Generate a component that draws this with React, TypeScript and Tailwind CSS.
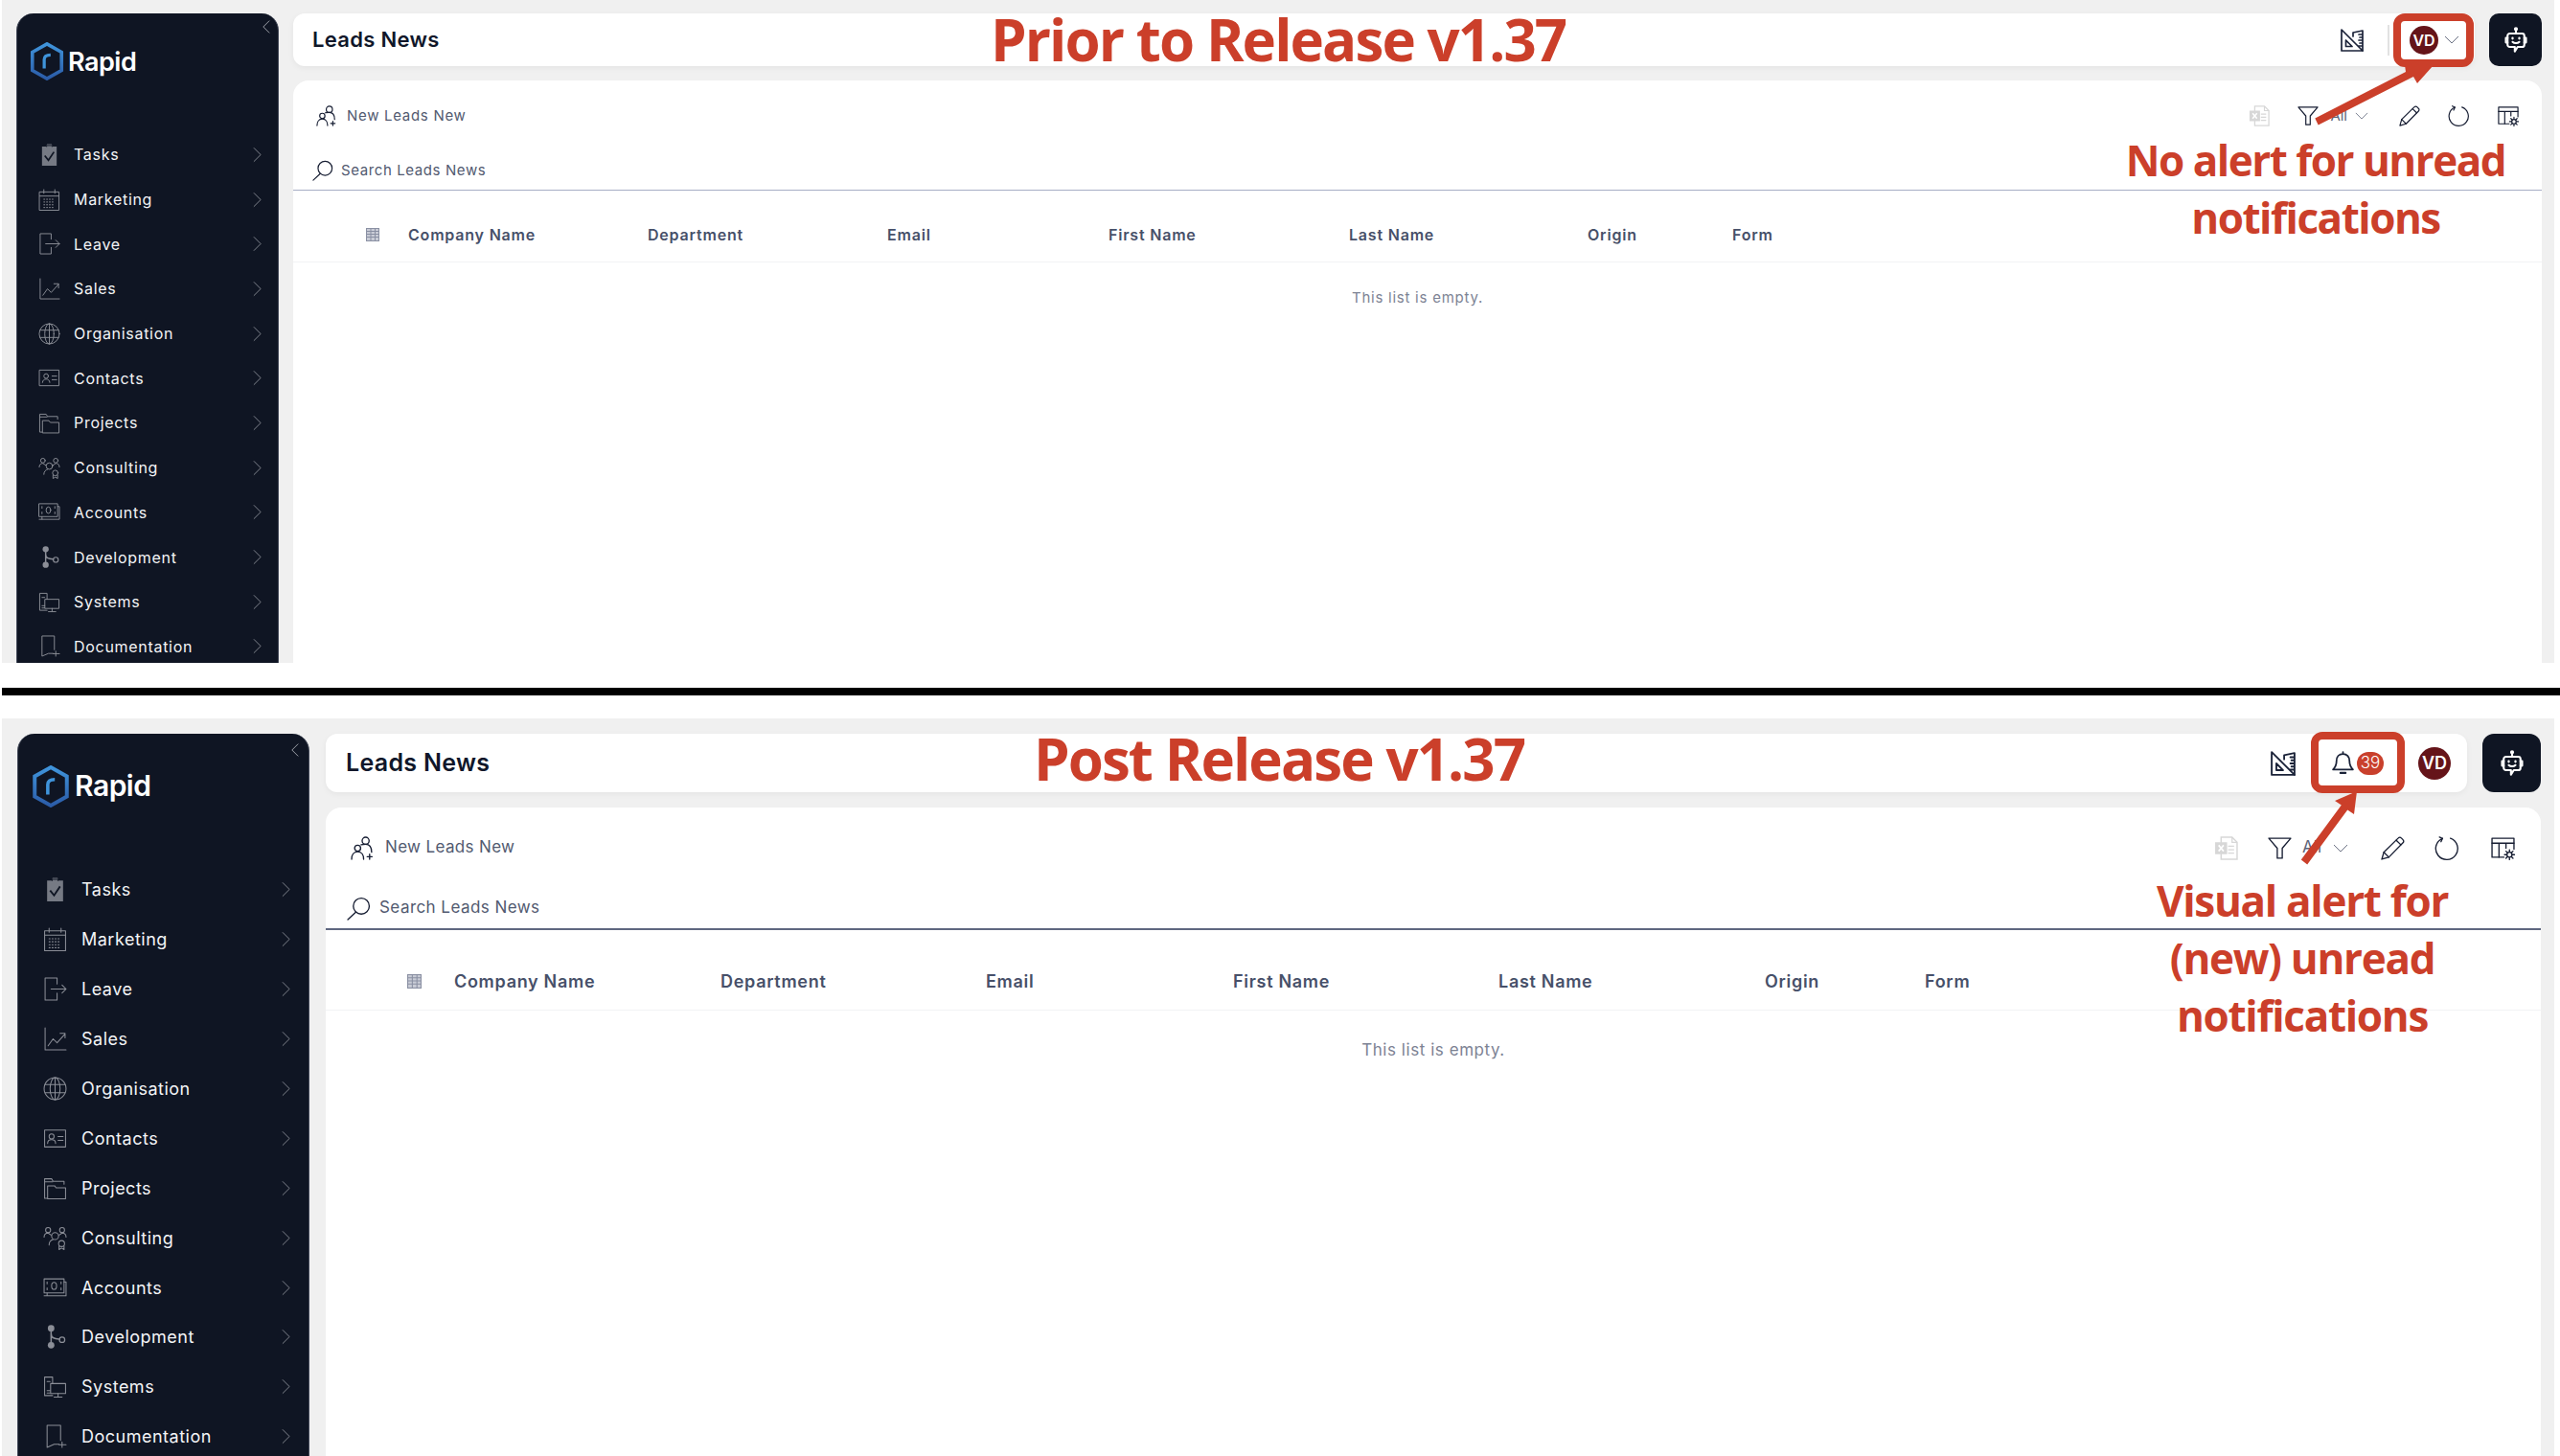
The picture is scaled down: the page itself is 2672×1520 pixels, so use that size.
import React from "react";

const FONT = "font-['Inter','Noto_Sans',sans-serif]";
const RED = "#cb3f2a";

type IconProps = { className?: string };
const Svg = ({ className, children, sw = 1 }: IconProps & { children: React.ReactNode; sw?: number }) => (
  <svg viewBox="0 0 24 24" fill="none" stroke="currentColor" strokeWidth={sw} strokeLinecap="round" strokeLinejoin="round" className={className}>
    {children}
  </svg>
);

const Tasks = (p: IconProps) => (
  <svg viewBox="0 0 24 24" className={p.className}>
    <path d="M4 3h4.500l1-2.500h5l1 2.500H20v21H4z" fill="#767a84" />
    <path d="M9 3.500V2h6v1.500" stroke="#0f1523" fill="none" />
    <path d="M7 13l4 5 6-9" stroke="#0f1523" strokeWidth="1.800" fill="none" />
  </svg>
);
const Marketing = (p: IconProps) => (
  <Svg {...p}>
    <rect x="1.500" y="3.500" width="21" height="20" />
    <path d="M1.500 8h21M6 1v4M18 1v4" />
    <path d="M6 11.500h12M6 14.500h12M6 17.500h12M6 20.500h12" strokeDasharray="1 2" />
  </Svg>
);
const Leave = (p: IconProps) => (
  <Svg {...p}>
    <path d="M14 7V1H2v22h12v-7" />
    <path d="M8 12h15M19 8l4 4-4 4" />
  </Svg>
);
const Sales = (p: IconProps) => (
  <Svg {...p}>
    <path d="M2 1v22h21" />
    <path d="M5 19l5-7 4 4 8-9M17 6.500h5V11" />
  </Svg>
);
const Org = (p: IconProps) => (
  <Svg {...p}>
    <circle cx="12" cy="12" r="11" />
    <ellipse cx="12" cy="12" rx="5" ry="11" />
    <path d="M12 1v22M2 8h20M2 16h20" />
  </Svg>
);
const Contacts = (p: IconProps) => (
  <Svg {...p}>
    <rect x="1.500" y="3.500" width="21" height="17" />
    <circle cx="8.500" cy="10" r="2.500" />
    <path d="M4.500 17c0-5 8-5 8 0M15 10h5M15 14h5" />
  </Svg>
);
const Projects = (p: IconProps) => (
  <Svg {...p}>
    <path d="M4 22H1.500V2.500h7l1.500 2.500h11v3" />
    <path d="M4.500 22.500V9.500h7l1.500 2h9.500v11z" />
    <path d="M1.500 5.500h8" />
  </Svg>
);
const Consulting = (p: IconProps) => (
  <Svg {...p}>
    <circle cx="5" cy="4" r="2.500" />
    <circle cx="19" cy="4" r="2.500" />
    <circle cx="12" cy="10" r="3.500" />
    <circle cx="18.500" cy="17.500" r="3" />
    <path d="M1 11c0-3 2-4 4-4l3 2M23 11c0-3-2-4-4-4l-3 2M6 19c0-3 2-5 4-5.500M16 20v3.500l2.500-1.500 2.500 1.500V20" />
  </Svg>
);
const Accounts = (p: IconProps) => (
  <Svg {...p}>
    <rect x="1" y="3" width="20" height="14" />
    <path d="M4 17v3h19V6h-2M1 20h3" />
    <ellipse cx="11" cy="10" rx="2.500" ry="3.500" />
    <path d="M4 6v2M4 12v2M18 6v2M18 12v2" />
  </Svg>
);
const Dev = (p: IconProps) => (
  <svg viewBox="0 0 24 24" className={p.className} fill="none">
    <path d="M8 4v16M8 9c0 5 5 5 9 5.500" stroke="#8b8e97" strokeWidth="1.500" />
    <circle cx="8" cy="3.500" r="3.300" fill="#8b8e97" />
    <circle cx="8" cy="20.500" r="3.300" fill="#8b8e97" />
    <circle cx="19" cy="15" r="2.700" stroke="#8b8e97" strokeWidth="1.200" />
  </svg>
);
const Systems = (p: IconProps) => (
  <Svg {...p}>
    <path d="M9.500 21H1.500V2.500h8V9" />
    <rect x="7.500" y="9" width="15" height="10" />
    <path d="M15 19v3M11 22.500h8M4 7h3M4 16h3M4 18.500h3" />
  </Svg>
);
const Doc = (p: IconProps) => (
  <Svg {...p}>
    <path d="M17.500 16V1H4v22l7-3h5" />
    <path d="M19 17.500v5.500M16 20.300h7" />
  </Svg>
);
const Chevron = ({ className }: IconProps) => (
  <svg viewBox="0 0 10 18" fill="none" stroke="currentColor" strokeWidth="1" className={className}>
    <path d="M1 1l8 8-8 8" />
  </svg>
);
const ChevronLeft = ({ className }: IconProps) => (
  <svg viewBox="0 0 10 18" fill="none" stroke="currentColor" strokeWidth="1.200" className={className}>
    <path d="M9 1L1 9l8 8" />
  </svg>
);
const ChevronDown = ({ className }: IconProps) => (
  <svg viewBox="0 0 16 9" fill="none" stroke="currentColor" strokeWidth="0.900" className={className}>
    <path d="M1 1l7 7 7-7" />
  </svg>
);
const Logo = ({ className, id }: IconProps & { id: string }) => (
  <svg viewBox="0 0 36 42" fill="none" className={className}>
    <defs>
      <linearGradient id={id} x1="0" y1="0" x2="0" y2="1">
        <stop offset="0" stopColor="#3f94db" />
        <stop offset="1" stopColor="#2b5ca8" />
      </linearGradient>
    </defs>
    <path d="M18 2l16 9v20l-16 9-16-9V11z" stroke={`url(#${id})`} strokeWidth="3.800" />
    <path d="M15 29V19c0-3 2-5 7-5" stroke="#3f94db" strokeWidth="3.400" />
  </svg>
);
const Ruler = (p: IconProps) => (
  <Svg {...p} sw={1.700}>
    <path d="M1 1l22 22H1z" />
    <path d="M5.500 12v6.500H12z" />
    <path d="M13 8V4l10-2v21M23 6h-4M23 9h-3M23 12h-4M23 15h-3M23 18h-4" />
  </Svg>
);
const Bot = (p: IconProps) => (
  <Svg {...p} sw={1.800}>
    <path d="M12 2v4" />
    <circle cx="12" cy="2" r="0.900" fill="currentColor" />
    <path d="M6.500 6h11a2 2 0 012 2v8a2 2 0 01-2 2h-4L11 22v-4H6.500a2 2 0 01-2-2V8a2 2 0 012-2z" />
    <path d="M4.500 10H3v4h1.500M19.500 10H21v4h-1.500M9 13.500c1.500 1.500 4.500 1.500 6 0" />
    <path d="M9 10v.5M15 10v.5" strokeWidth="2" />
  </Svg>
);
const Bell = (p: IconProps) => (
  <Svg {...p} sw={1.700}>
    <path d="M12 3c-4 0-6.500 3-6.500 7 0 5-1.500 6.500-3.500 8.500h20c-2-2-3.500-3.500-3.500-8.500 0-4-2.500-7-6.500-7zM12 1v2" />
    <path d="M9.500 22h5" strokeWidth="2.200" />
  </Svg>
);
const Excel = ({ className }: IconProps) => (
  <svg viewBox="0 0 24 24" className={className} fill="none">
    <path d="M7 1h11l5 5v17H7z" stroke="#d7d7d7" strokeWidth="1.400" />
    <path d="M18 1v5h5M14 10h6M14 13.500h6M14 17h6" stroke="#d7d7d7" strokeWidth="1.200" />
    <rect x="1" y="6" width="12" height="12" fill="#d7d7d7" />
    <path d="M4.500 9l5 6M9.500 9l-5 6" stroke="#fff" strokeWidth="1.600" />
  </svg>
);
const Filter = (p: IconProps) => (
  <Svg {...p} sw={1.300}>
    <path d="M1 2h22l-8.500 10v10h-5V12z" />
  </Svg>
);
const Pencil = (p: IconProps) => (
  <Svg {...p} sw={1.300}>
    <path d="M1 23l2-7L17.500 1.800a2 2 0 013 0l1.700 1.700a2 2 0 010 3L8 21z" />
    <path d="M3 16l5 5M15.500 4l4.500 4.500" />
  </Svg>
);
const Refresh = (p: IconProps) => (
  <Svg {...p} sw={1.300}>
    <path d="M8 2.200A11 11 0 1016 2" />
    <path d="M8 2.200L5 .8M8 2.200L6.500 5.500" />
  </Svg>
);
const TableGear = (p: IconProps) => (
  <Svg {...p} sw={1.300}>
    <path d="M13 21H1V2h22v11" />
    <path d="M1 7h22M8 7v14M15 7v5" />
    <circle cx="18.500" cy="18.500" r="2.500" />
    <path d="M18.500 13.500v2M18.500 21.500v2M13.500 18.500h2M21.500 18.500h2M15 15l1.400 1.400M20.600 20.600L22 22M15 22l1.400-1.400M20.600 16.400L22 15" />
  </Svg>
);
const AddPeople = (p: IconProps) => (
  <Svg {...p} sw={1.300}>
    <circle cx="15" cy="4.500" r="3.500" />
    <circle cx="7" cy="12" r="3" />
    <path d="M1 23c0-4 2-7.500 6-7.500s6 3.500 6 7.500M10.500 8.500c1-.5 2.500-.5 4.500-.5 4 0 6 3 6 8M19 18v5M16.500 20.500h5" />
  </Svg>
);
const Search = (p: IconProps) => (
  <Svg {...p} sw={1.300}>
    <circle cx="14.500" cy="9.500" r="8" />
    <path d="M9 15.500L1 23" />
  </Svg>
);
const GridIcon = ({ className }: IconProps) => (
  <svg viewBox="0 0 14 14" fill="none" stroke="#8a90a3" strokeWidth="1" className={className}>
    <rect x="0.500" y="0.500" width="13" height="13" fill="#c9ccd6" />
    <path d="M0.500 3.500h13M0.500 6.500h13M0.500 9.500h13M5 0.500v13M9.500 0.500v13" />
  </svg>
);

const MENU: [string, (p: IconProps) => React.ReactElement][] = [
  ["Tasks", Tasks],
  ["Marketing", Marketing],
  ["Leave", Leave],
  ["Sales", Sales],
  ["Organisation", Org],
  ["Contacts", Contacts],
  ["Projects", Projects],
  ["Consulting", Consulting],
  ["Accounts", Accounts],
  ["Development", Dev],
  ["Systems", Systems],
  ["Documentation", Doc],
];

const COLUMNS = ["Company Name", "Department", "Email", "First Name", "Last Name", "Origin", "Form"];

type Theme = typeof TOP;

const TOP = {
  section: "h-[692px] pl-[15px] pr-[13px] pt-[14px] gap-[15px]",
  sidebar: "w-[274px]",
  collapseWrap: "h-[30px] pr-[8px] pt-[6px]",
  collapse: "h-[16px] w-[8px]",
  logoWrap: "h-[94px] pl-[13px] gap-[4px]",
  logo: "h-[40px] w-[36px]",
  logoText: "text-[27px]",
  row: "h-[46.7px] pl-[22px] pr-[17px]",
  icon: "h-[23px] w-[23px]",
  label: "ml-[14px] text-[16px] tracking-[0.7px]",
  chev: "h-[17px] w-[9px]",
  main: "gap-[15px]",
  header: "h-[55px] pl-[20px]",
  title: "text-[22px] tracking-[0.3px]",
  headerGap: "gap-[15px]",
  toolbar: "h-[74px] pl-[24px] pr-[24px]",
  newText: "ml-[10px] text-[15px] tracking-[0.7px]",
  smallIcon: "h-[22px] w-[22px]",
  chevDown: "h-[8px] w-[14px]",
  search: "h-[41px] pl-[20px] gap-[8px] border-b-[1.5px] border-[#a7aec6]",
  searchText: "text-[15px] tracking-[0.6px]",
  tableHead: "h-[75px] pl-[76px] pt-[18px]",
  gridIcon: "h-[14px] w-[14px]",
  gridGap: "w-[44px]",
  colText: "text-[16px] tracking-[0.8px]",
  emptyRow: "h-[74px]",
  emptyText: "text-[15px] tracking-[0.75px]",
  w: ["w-[250px]", "w-[250px]", "w-[231px]", "w-[251px]", "w-[249px]", "w-[151px]", "w-[100px]"],
  gaps: ["ml-[29px]", "ml-[12px]", "ml-[8px]", "ml-[32px]", "ml-[29px]", "ml-[30px]"],
  allText: "text-[15px]",
};

const BOTTOM: Theme = {
  section: "h-[770px] pl-[16px] pr-[14px] pt-[16px] gap-[17px]",
  sidebar: "w-[305px]",
  collapseWrap: "h-[33px] pr-[10px] pt-[9px]",
  collapse: "h-[16px] w-[8px]",
  logoWrap: "h-[104px] pl-[15px] gap-[6px]",
  logo: "h-[44px] w-[38px]",
  logoText: "text-[30px]",
  row: "h-[51.9px] pl-[26px] pr-[19px]",
  icon: "h-[25px] w-[25px]",
  label: "ml-[15px] text-[18px] tracking-[0.5px]",
  chev: "h-[17px] w-[9px]",
  main: "gap-[16px]",
  header: "h-[61px] pl-[21px]",
  title: "text-[25px] tracking-[0.3px]",
  headerGap: "gap-[16px]",
  toolbar: "h-[84px] pl-[26px] pr-[27px]",
  newText: "ml-[11px] text-[17px] tracking-[0.35px]",
  smallIcon: "h-[25px] w-[25px]",
  chevDown: "h-[9px] w-[16px]",
  search: "h-[44px] pl-[22px] gap-[9px] border-b-2 border-[#5f6780]",
  searchText: "text-[17px] tracking-[0.45px]",
  tableHead: "h-[84px] pl-[85px] pt-[24px]",
  gridIcon: "h-[15px] w-[15px]",
  gridGap: "w-[49px]",
  colText: "text-[18px] tracking-[0.7px]",
  emptyRow: "h-[84px]",
  emptyText: "text-[17px] tracking-[0.55px]",
  w: ["w-[278px]", "w-[277px]", "w-[258px]", "w-[277px]", "w-[278px]", "w-[167px]", "w-[100px]"],
  gaps: ["ml-[31px]", "ml-[11px]", "ml-[12px]", "ml-[34px]", "ml-[31px]", "ml-[34px]"],
  allText: "text-[17px]",
};

function Sidebar({ t, id }: { t: Theme; id: string }) {
  return (
    <aside className={`${t.sidebar} flex-none h-[900px] rounded-t-[18px] bg-[#0f1523] border-x border-[#444a5a] text-white`}>
      <div className={`${t.collapseWrap} flex justify-end text-[#a2a5ae]`}>
        <ChevronLeft className={t.collapse} />
      </div>
      <div className={`${t.logoWrap} flex items-start`}>
        <Logo id={id} className={t.logo} />
        <span className={`${t.logoText} font-semibold leading-[40px] mt-[1px] tracking-[-0.5px]`}>Rapid</span>
      </div>
      {MENU.map(([label, Icon]) => (
        <div key={label} className={`${t.row} flex items-center`}>
          <span className="text-[#8b8e97] flex-none">
            <Icon className={`${t.icon} block`} />
          </span>
          <span className={`${t.label} flex-1 text-[#f3f4f6]`}>{label}</span>
          <span className="text-[#8b8e97]">
            <Chevron className={`${t.chev} block`} />
          </span>
        </div>
      ))}
    </aside>
  );
}

function Toolbar({ t }: { t: Theme }) {
  return (
    <div className="flex items-center">
      <Excel className={t.smallIcon} />
      <Filter className={`${t.smallIcon} ${t.gaps[0]}`} />
      <span className={`${t.gaps[1]} ${t.allText} text-[#5d6478]`}>All</span>
      <ChevronDown className={`${t.chevDown} ${t.gaps[2]} text-[#5d6478]`} />
      <Pencil className={`${t.smallIcon} ${t.gaps[3]}`} />
      <Refresh className={`${t.smallIcon} ${t.gaps[4]}`} />
      <TableGear className={`${t.smallIcon} ${t.gaps[5]}`} />
    </div>
  );
}

function Card({ t }: { t: Theme }) {
  return (
    <section className="flex-1 rounded-t-[16px] bg-white min-h-0 text-[#171e33]">
      <div className={`${t.toolbar} flex items-center justify-between`}>
        <div className="flex items-center">
          <AddPeople className={t.smallIcon} />
          <span className={`${t.newText} text-[#525a70]`}>New Leads New</span>
        </div>
        <Toolbar t={t} />
      </div>
      <div className={`${t.search} flex items-center`}>
        <Search className={t.smallIcon} />
        <span className={`${t.searchText} text-[#525a70]`}>Search Leads News</span>
      </div>
      <div className={`${t.tableHead} flex items-center border-b border-[#f2f3f5]`}>
        <div className={`${t.gridGap} flex-none`}>
          <GridIcon className={t.gridIcon} />
        </div>
        {COLUMNS.map((c, i) => (
          <span key={c} className={`${t.w[i]} ${t.colText} flex-none font-semibold text-[#475069]`}>
            {c}
          </span>
        ))}
      </div>
      <div className={`${t.emptyRow} flex items-center justify-center ${t.emptyText} text-[#7d8394]`}>This list is empty.</div>
    </section>
  );
}

function Avatar({ className }: IconProps) {
  return <div className={`${className} flex-none rounded-full bg-[#651419] flex items-center justify-center font-semibold text-white`}>VD</div>;
}

function TopHeader() {
  const t = TOP;
  return (
    <div className={`flex ${t.headerGap} flex-none`}>
      <header className={`${t.header} flex-1 flex items-center rounded-[12px] bg-white shadow-[0_2px_6px_rgba(0,0,0,0.05)]`}>
        <h1 className={`${t.title} flex-1 font-semibold text-[#10172a]`}>Leads News</h1>
        <Ruler className="h-[24px] w-[24px] text-[#1a2238]" />
        <div className="ml-[25px] h-[32px] w-[2px] bg-[#e2e2e2]" />
        <Avatar className="ml-[21px] h-[30px] w-[30px] text-[16px]" />
        <ChevronDown className="ml-[6px] mr-[16px] h-[9px] w-[16px] text-[#5d6478]" />
      </header>
      <button className="h-[55px] w-[55px] flex-none rounded-[10px] bg-[#0f1523] text-white flex items-center justify-center">
        <Bot className="h-[28px] w-[28px]" />
      </button>
    </div>
  );
}

function BottomHeader() {
  const t = BOTTOM;
  return (
    <div className={`flex ${t.headerGap} flex-none`}>
      <header className={`${t.header} flex-1 flex items-center rounded-[12px] bg-white shadow-[0_2px_6px_rgba(0,0,0,0.05)]`}>
        <h1 className={`${t.title} flex-1 font-semibold text-[#10172a]`}>Leads News</h1>
        <Ruler className="h-[26px] w-[26px] text-[#1a2238]" />
        <Bell className="ml-[37px] h-[25px] w-[25px] text-[#1a2238]" />
        <span className="ml-[2px] h-[24px] w-[28px] rounded-full bg-[#c9402c] flex items-center justify-center text-[17px] font-light text-white">39</span>
        <Avatar className="ml-[36px] mr-[17px] h-[34px] w-[34px] text-[18px]" />
      </header>
      <button className="h-[61px] w-[61px] flex-none rounded-[12px] bg-[#0f1523] text-white flex items-center justify-center">
        <Bot className="h-[28px] w-[28px]" />
      </button>
    </div>
  );
}

function Screen({ t, id, header }: { t: Theme; id: string; header: React.ReactNode }) {
  return (
    <div className={`${t.section} ml-[2px] w-[2664px] flex overflow-hidden bg-[#f0f0f0]`}>
      <Sidebar t={t} id={id} />
      <div className={`${t.main} flex-1 flex flex-col min-w-0`}>
        {header}
        <Card t={t} />
      </div>
    </div>
  );
}

const NOTE = "absolute text-center font-['Open_Sans',sans-serif] font-bold text-[#cb3f2a] whitespace-nowrap";

export default function App() {
  return (
    <div className={`relative h-[1520px] w-[2672px] overflow-hidden bg-white ${FONT}`}>
      <Screen t={TOP} id="logo-a" header={<TopHeader />} />
      <div className="h-[26px]" />
      <div className="ml-[2px] h-[8px] bg-black" />
      <div className="h-[24px]" />
      <Screen t={BOTTOM} id="logo-b" header={<BottomHeader />} />

      <div className={`${NOTE} left-[1034px] top-[2px] w-[600px] text-[60px] leading-[78px] tracking-[-1.9px]`}>Prior to Release v1.37</div>
      <div className={`${NOTE} left-[1035px] top-[753px] w-[600px] text-[60px] leading-[78px] tracking-[-1.9px]`}>Post Release v1.37</div>
      <div className={`${NOTE} left-[2167px] top-[137px] w-[500px] text-[44px] leading-[60px] tracking-[-1.5px]`}>
        No alert for unread
        <br />
        notifications
      </div>
      <div className={`${NOTE} left-[2153px] top-[910px] w-[500px] text-[44px] leading-[60px] tracking-[-1.3px]`}>
        Visual alert for
        <br />
        (new) unread
        <br />
        notifications
      </div>

      <div className="absolute left-[2498px] top-[14px] h-[56px] w-[84px] rounded-[12px] border-[8px] border-[#cb3f2a]" />
      <div className="absolute left-[2412px] top-[764px] h-[64px] w-[98px] rounded-[12px] border-[8px] border-[#cb3f2a]" />

      <svg className="absolute left-[2380px] top-[60px] h-[860px] w-[200px]" viewBox="2380 60 200 860" fill={RED}>
        <path d="M2416.300 123.400L2511 75l-1-7h30l-17 19-4-7-99.300 50.600z" />
        <path d="M2401.800 897.600l42-57-6.800-4.600 23-10-3 24-6.800-4.600-42 57z" />
      </svg>
    </div>
  );
}
